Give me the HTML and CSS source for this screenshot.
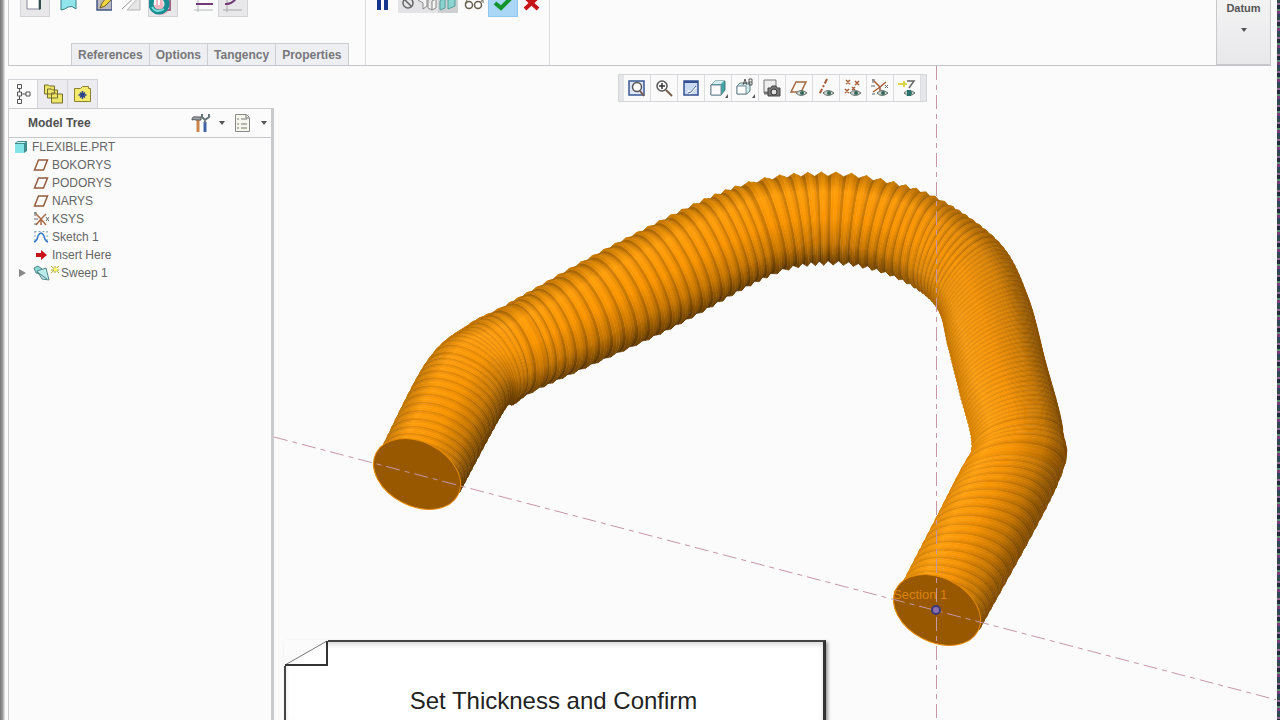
FILE: index.html
```html
<!DOCTYPE html>
<html lang="en">

<head>
    <meta charset="UTF-8">
    <meta name="viewport" content="width=device-width, initial-scale=1.0">
    <title>FLEXIBLE.PRT</title>
    <link rel="stylesheet" href="styles.css">
</head>

<body>
    <div class="app">
        <header class="ribbon">
            <div class="group sweep-group">
                <div class="tools">
                    <button class="tool raised" aria-label="Solid"><svg width="28" height="16"><path d="M6-4H18V9H6Z" fill="#fff" stroke="#889"/><path d="M18-3L20-5V9L18 10Z" fill="#334d4d"/></svg></button>
                    <button class="tool" aria-label="Surface"><svg width="28" height="16"><path d="M7-4Q14 1 22-3V9Q18 5 14 7Q10 10 7 10Z" fill="#8fe5ea" stroke="#367f88"/></svg></button>
                    <button class="tool" aria-label="Sketch"><svg width="28" height="16"><path d="M13-4H28V10H13Z" fill="#b9b9b9" stroke="#46568a" stroke-width="1.500"/><path d="M16 8L18 3L23-3L27 0L21 6Z" fill="#f0d640" stroke="#6b5b20"/></svg></button>
                    <button class="tool" aria-label="Remove material"><svg width="28" height="16"><path d="M13 10L26-4V10Z" fill="#e6e6e6" stroke="#b5b5b5"/><path d="M8 9L23-5" stroke="#999"/></svg></button>
                    <button class="tool raised thicken" aria-label="Thicken"><svg width="28" height="16"><circle cx="11" cy="4" r="11" fill="#f3a3ae" opacity=".7"/><path d="M13-3H21V10H15" fill="#eee" stroke="#8b3f70" stroke-width="1.500"/><circle cx="10" cy="4" r="8" fill="none" stroke="#178c91" stroke-width="5"/><path d="M3 7Q7 14 15 9" fill="none" stroke="#77dadb" stroke-width="2"/><path d="M6-1V5M10-2V5" stroke="#fff" stroke-width="2"/></svg></button>
                    <button class="tool constant" aria-label="Constant section"><svg width="28" height="16"><path d="M4-3V12M0 10H19" stroke="#b3baba"/><path d="M2 4H19" stroke="#713a77" stroke-width="2"/></svg></button>
                    <button class="tool raised" aria-label="Variable section"><svg width="28" height="16"><path d="M8-3V12M4 10H23" stroke="#a9a9a9"/><path d="M6 4Q13 5 18-3" fill="none" stroke="#713a77" stroke-width="2"/></svg></button>
                </div>
                <nav class="ribbon-tabs">
                    <button>References</button>
                    <button>Options</button>
                    <button>Tangency</button>
                    <button>Properties</button>
                </nav>
            </div>
            <div class="group confirm-group">
                <button class="tool pause" aria-label="Pause"><svg width="14" height="16"><path d="M1-2H5V10H1ZM8-2H12V10H8Z" fill="#17378e"/></svg></button>
                <button class="tool preview-modes" aria-label="Preview mode"><svg width="60" height="13"><path d="M40 0H60V13H40Z" fill="#cdd1d2"/><circle cx="10" cy="3" r="5" fill="none" stroke="#666" stroke-width="1.5"/><path d="M6-1L14 7" stroke="#666" stroke-width="1.5"/><path d="M20 0L25 3V9L29 6V0M30 0V8L34 10V1L38-1V8L34 10" fill="#f4f4f4" stroke="#888"/><path d="M42 1L47-2V8L42 10ZM50 0V9L57 6V-3Z" fill="#8bd4d0" stroke="#559e9d"/></svg></button>
                <button class="tool glasses" aria-label="Verified preview"><svg width="24" height="16"><path d="M1 4L4-2M16 3L19-1V3" fill="none" stroke="#67604e"/><circle cx="5" cy="5" r="3.5" fill="#fff" stroke="#67604e" stroke-width="1.5"/><circle cx="14" cy="5" r="3.5" fill="#fff" stroke="#67604e" stroke-width="1.5"/></svg></button>
                <button class="tool ok" aria-label="OK"><svg width="28" height="16"><path d="M6 3L12 8L22-2" fill="none" stroke="#13952b" stroke-width="4"/></svg></button>
                <button class="tool cancel" aria-label="Cancel"><svg width="18" height="16"><path d="M2-3L15 9M15-3L2 9" stroke="#c71517" stroke-width="4"/></svg></button>
            </div>
            <button class="datum">Datum<span class="caret"></span></button>
        </header>

        <main class="workspace">
            <aside class="sidebar">
                <div class="side-tabs">
                    <button class="active" aria-label="Model tree"><svg width="18" height="20" fill="none" stroke="#555"><path d="M3.500.500h4v4h-4zM3.500 8h4v4h-4zM3.500 15.500h4v4h-4zM12 8h4v4h-4zM5.500 5v3M5.500 12v3M8 10h4"/></svg></button>
                    <button aria-label="Folder browser"><svg width="20" height="20" fill="#eee668" stroke="#756d2e"><path d="M1.500 3v-2h4l1 1h5v8h-10zM4.500 7v-2h4l1 1h5v8h-10zM8.500 11v-2h4l1 1h6v9h-11z"/></svg></button>
                    <button aria-label="Favorites"><svg width="20" height="20"><path d="M1.500 4.500h6l2-2h6v2h2v13h-16z" fill="#f4ea6d" stroke="#8c812f"/><path d="M9.500 7v8M5.500 11h8M7 8.500l5 5M12 8.500l-5 5" stroke="#27418c" stroke-width="1.500"/></svg></button>
                </div>
                <section class="tree-panel">
                    <div class="tree-header">
                        <h2>Model Tree</h2>
                        <button class="tree-button" aria-label="Tree settings"><svg width="20" height="20"><path d="M7 7V19" stroke="#cc8448" stroke-width="3"/><path d="M1 7Q1 3 5 4H10V7H5Q3 6 1 7Z" fill="#9ba7ad" stroke="#555"/><path d="M14 9V19" stroke="#3f64a8" stroke-width="3"/><path d="M11 1V4L14 7L18 4V1M14 6V10" fill="none" stroke="#66757b" stroke-width="2"/></svg><span class="caret"></span></button>
                        <button class="tree-button" aria-label="Tree display"><svg width="20" height="20"><path d="M2.500 1.500h11l3 3v14h-14z" fill="#f7f7ee" stroke="#888"/><path d="M13 2v3h3M4 6h2M4 11h2M4 15h2M8 6h6M8 11h6M8 15h6" fill="none" stroke="#777"/></svg><span class="caret"></span></button>
                    </div>
                    <ul class="tree">
                        <li class="root"><svg width="16" height="16"><path d="M2 4L5 2H14V12L11 14H2Z" fill="#438c8e"/><path d="M2 5H11V14H2Z" fill="#83e4e8"/><path d="M3 4L5 3H13L11 4Z" fill="#c9f5f6"/></svg>FLEXIBLE.PRT</li>
                        <li><svg width="16" height="16"><use href="#plane"/></svg>BOKORYS</li>
                        <li><svg width="16" height="16"><use href="#plane"/></svg>PODORYS</li>
                        <li><svg width="16" height="16"><use href="#plane"/></svg>NARYS</li>
                        <li><svg width="16" height="16"><use href="#csys"/></svg>KSYS</li>
                        <li><svg width="16" height="16"><path d="M1.500 2.500h13M2 2v12M14 2v12" stroke="#8aa" stroke-dasharray="2 2"/><path d="M1 13Q4 12 5 7Q8 1 11 7Q12 12 15 13" fill="none" stroke="#2f78c8" stroke-width="1.500"/></svg>Sketch 1</li>
                        <li><svg width="16" height="16"><path d="M3 6H8V3L14 8L8 13V10H3Z" fill="#c9141c"/></svg>Insert Here</li>
                        <li class="sweep"><span class="expander"></span><svg width="26" height="16"><path d="M1 3L5 1L9 4V9L3 8Z" fill="#8adbd8" stroke="#588"/><path d="M4 6L13 3L16 15L9 14Z" fill="#b9eceb" stroke="#588"/><path d="M4 7L14 14" stroke="#477"/><path d="M18 1L26 8M26 1L18 8M22 1V8M18 5H26" stroke="#a9a82a"/><path d="M21 3h3v3h-3z" fill="#ffff5a"/></svg>Sweep 1</li>
                    </ul>
                </section>
            </aside>

            <section class="stage">
                <svg class="model" viewBox="274 66 1002 654" preserveAspectRatio="xMinYMin slice">
                    <defs id="gradients"></defs>
                    <g id="hose"></g>
                    <ellipse class="cap" cx="417" cy="474" rx="46" ry="32" transform="rotate(27 417 474)"/>
                    <ellipse class="cap" cx="937" cy="610" rx="46" ry="32" transform="rotate(27 937 610)"/>
                    <path class="axis" d="M274 437L1277 700"/>
                    <path class="axis" d="M936.500 66V720"/>
                    <circle cx="936" cy="610" r="4" fill="#8b70ae" stroke="#3d3978" stroke-width="2"/>
                    <text class="section-label" x="893" y="599">Section 1</text>
                </svg>

                <div class="view-toolbar">
                    <button aria-label="Refit"><svg width="20" height="20"><path d="M2 3h15v14H2z" fill="#dfe7f6" stroke="#395994" stroke-width="1.500"/><circle cx="10" cy="9" r="4.500" fill="#fff" stroke="#555" stroke-width="1.500"/><path d="M13 13l4 5" stroke="#795b49" stroke-width="2"/></svg></button>
                    <button aria-label="Zoom in"><svg width="20" height="20"><circle cx="8" cy="8" r="5" fill="#fff" stroke="#555" stroke-width="1.500"/><path d="M5 8h6M8 5v6" stroke="#333" stroke-width="1.500"/><path d="M12 12l6 6" stroke="#775c4d" stroke-width="2"/></svg></button>
                    <button aria-label="Repaint"><svg width="20" height="20"><path d="M3 3h14v14H3z" fill="#c9daf3" stroke="#344f91" stroke-width="1.500"/><path d="M3 4h14" stroke="#344f91" stroke-width="2"/><path d="M7 13l2 2L15 9" fill="none" stroke="#fff" stroke-width="2"/><path d="M7 15l3-1 5-6" fill="none" stroke="#46639c"/></svg></button>
                    <button aria-label="Display style"><svg width="20" height="20"><path d="M3 7l4-4h10v9l-4 5H3z" fill="#40a6a4" stroke="#467e7f"/><path d="M3 7h10v10H3z" fill="#fafafa" stroke="#789"/><path d="M4 6l3-3h9l-3 3z" fill="#d5efef"/><path d="M17 20l3-4v4z" fill="#555"/></svg></button>
                    <button aria-label="Saved orientations"><svg width="20" height="20"><path d="M2 8l3-3h10v8l-3 3H2z" fill="#cdeaea" stroke="#607e80"/><path d="M2 8h9v8H2z" fill="#fff" stroke="#789"/><path d="M8 7l2-6 2 6M9 5h3M14 1v6h3V1h-3M14 4h3" fill="none" stroke="#555"/><path d="M17 20l3-4v4z" fill="#555"/></svg></button>
                    <button aria-label="View manager"><svg width="20" height="20"><path d="M2 15V2h12v6" fill="#eee" stroke="#777"/><path d="M2 15h4" stroke="#777" stroke-width="3"/><path d="M6 10h3l1-2h4l1 2h3v8H6z" fill="#777" stroke="#444"/><circle cx="12" cy="14" r="3" fill="#ddd" stroke="#333"/></svg></button>
                    <button aria-label="Plane display"><svg width="20" height="20"><path d="M2 14L7 4h10l-5 10z" fill="#fffaf4" stroke="#a36842" stroke-width="1.500"/><use href="#eye"/></svg></button>
                    <button aria-label="Axis display"><svg width="20" height="20"><path d="M11 1L3 17" stroke="#a65c36" stroke-width="2" stroke-dasharray="5 2 2 2"/><use href="#eye"/></svg></button>
                    <button aria-label="Point display"><svg width="20" height="20"><path d="M3 2l4 4M7 2L3 6M12 3l4 4M16 3l-4 4M2 11l4 4M6 11l-4 4M9 9l3 3M12 9l-3 3" stroke="#a65c36" stroke-width="1.500"/><use href="#eye"/></svg></button>
                    <button aria-label="Csys display"><svg width="20" height="20"><path d="M10 9L4 3M10 9l6-5M10 9l-7 5M10 9v5" stroke="#a65c36" stroke-width="1.500"/><path d="M2 2h3M3 1v4M1 8h4M15 7l3 3M18 7l-3 3M2 16h3" stroke="#666"/><use href="#eye"/></svg></button>
                    <button aria-label="Annotation display"><svg width="20" height="20"><path d="M1 6h9M7 3v6" stroke="#ddd344" stroke-width="2"/><path d="M10 3h7l-5 7" fill="none" stroke="#666" stroke-width="1.500"/><use href="#eye"/><path d="M10 12h4v6h-4z" fill="#28746d"/></svg></button>
                </div>

                <div class="note">
                    <svg class="note-fold" width="44" height="26"><path d="M1 25L43 1V25Z" fill="#fff"/><path d="M1 25L43 1" stroke="#777"/><path d="M1 25H43V1" fill="none" stroke="#333" stroke-width="2"/></svg>
                    <p>Set Thickness and Confirm</p>
                </div>
            </section>
        </main>
    </div>

    <svg class="symbols">
        <symbol id="plane" viewBox="0 0 16 16"><path d="M1.500 13L5.500 3h9l-4 10z" fill="none" stroke="#945c40" stroke-width="1.500"/></symbol>
        <symbol id="csys" viewBox="0 0 16 16"><path d="M8 8L3 3M8 8l5-5M8 8l-5 6M8 8l5 6M8 8V14" stroke="#a96b45" stroke-width="1.500"/><path d="M1 2h3M2 1v4M1 8h4M13 6l3 4M16 6l-3 4M1 13h3" stroke="#666"/></symbol>
        <symbol id="eye" viewBox="0 0 20 20"><path d="M7 15q5-5 11 0q-6 5-11 0z" fill="#ccd8d4" stroke="#626d65"/><circle cx="13" cy="15" r="2" fill="#35685c"/></symbol>
    </svg>

    <script src="hose.js"></script>
</body>

</html>
```

FILE: styles.css
```css
* {
    box-sizing: border-box;
}

body {
    margin: 0;
    font-family: "Liberation Sans", Arial, sans-serif;
    font-size: 12px;
    color: #666;
    background: #fbfbfb;
}

button {
    margin: 0;
    padding: 0;
    border: 0;
    background: none;
    font: inherit;
    color: inherit;
}

svg {
    display: block;
    flex: none;
}

.app {
    display: flex;
    flex-direction: column;
    height: 100vh;
    overflow: hidden;
    padding: 0 4px 0 8px;
    position: relative;
}

/* window edges */
.app::before,
.app::after {
    content: "";
    position: absolute;
    top: 0;
    bottom: 0;
}

.app::before {
    left: 0;
    width: 5px;
    background: linear-gradient(to right, #777, #999 50%, #eee);
}

.app::after {
    right: 0;
    width: 3px;
    background: repeating-linear-gradient(#314c49 0 3px, #92689b 3px 5px, #222a3b 5px 9px, #5a8d72 9px 11px, #793c79 11px 14px, #30445f 14px 17px);
}

/* ribbon */
.ribbon {
    display: flex;
    height: 66px;
    flex: none;
    border-left: 1px solid #ccc;
    border-bottom: 1px solid #c4c5c8;
    margin-right: 5px;
}

.group {
    border-right: 1px solid #d8dade;
}

.sweep-group {
    display: flex;
    flex-direction: column;
    justify-content: space-between;
    width: 357px;
}

.tools {
    display: flex;
    gap: 5px;
    padding-left: 12px;
}

.tool {
    height: 16px;
}

.raised {
    background: #e8e8ea;
    box-shadow: 0 0 0 1px #d3d3d6;
}

.tools .tool:nth-child(3),
.tools .tool:nth-child(4) {
    margin-left: -3px;
}

.thicken {
    margin-left: 2px;
}

.constant {
    margin-left: 12px;
    margin-right: -8px;
}

.ribbon-tabs {
    display: flex;
    padding-left: 62px;
}

.ribbon-tabs button {
    height: 22px;
    padding: 0 6px;
    border: 1px solid #ccced2;
    border-bottom: 0;
    border-left-width: 0;
    background: #eeeff2;
    font-weight: bold;
    color: #77777b;
}

.ribbon-tabs button:first-child {
    border-left-width: 1px;
}

.confirm-group {
    display: flex;
    align-items: flex-start;
    gap: 6px;
    width: 184px;
    padding-left: 10px;
}

.preview-modes {
    height: 13px;
    background: #e4e4e6;
    margin-left: 2px;
}

.glasses {
    margin-right: -5px;
}

.ok {
    background: #aad7f5;
    box-shadow: 0 0 0 1px #91c7ec;
}

.datum {
    display: flex;
    flex-direction: column;
    align-items: center;
    gap: 14px;
    width: 55px;
    height: 65px;
    margin-left: auto;
    padding-top: 2px;
    border: 1px solid #c8c8ca;
    border-top: 0;
    background: linear-gradient(#f3f3f4, #e8e8ea);
    font-weight: bold;
    font-size: 11px;
    color: #555;
}

.caret {
    border: 3px solid transparent;
    border-top: 4px solid #555;
    border-bottom: 0;
}

/* model tree */
.workspace {
    display: flex;
    flex: 1;
    min-height: 0;
}

.sidebar {
    display: flex;
    flex-direction: column;
    width: 266px;
    flex: none;
    padding-top: 13px;
}

.side-tabs {
    display: flex;
}

.side-tabs button {
    display: grid;
    place-items: center;
    width: 30px;
    height: 29px;
    border: 1px solid #d3d4d8;
    border-left-width: 0;
    border-bottom: 0;
    background: #ececf0;
}

.side-tabs .active {
    border-left-width: 1px;
    background: #fbfbfb;
}

.tree-panel {
    flex: 1;
    border: 1px solid #ccc;
    border-right: 3px solid #c9cacc;
    border-bottom: 0;
}

.tree-header {
    display: flex;
    align-items: center;
    gap: 8px;
    height: 29px;
    padding: 0 4px 0 19px;
    border-bottom: 1px solid #c8c9cc;
}

.tree-header h2 {
    flex: 1;
    margin: 0;
    font-size: 12px;
    color: #505050;
}

.tree-button {
    display: flex;
    align-items: center;
    gap: 8px;
}

.tree {
    margin: 0;
    padding: 0;
    list-style: none;
}

.tree li {
    display: flex;
    align-items: center;
    gap: 3px;
    height: 18px;
    padding-left: 24px;
}

.tree .root {
    padding-left: 4px;
}

.tree .sweep {
    gap: 2px;
    padding-left: 10px;
}

.expander {
    border: 4px solid transparent;
    border-left: 7px solid #888;
    border-right: 0;
    margin-right: 5px;
}

/* graphics window */
.stage {
    position: relative;
    flex: 1;
    overflow: hidden;
}

.model {
    width: 100%;
    height: 100%;
}

.cap {
    fill: #975800;
    stroke: #e48900;
    stroke-width: 1px;
}

.axis {
    fill: none;
    stroke: #c697a5;
    stroke-width: 1px;
    stroke-dasharray: 14 5 5 5;
}

.section-label {
    font-size: 13px;
    fill: #dc8307;
}

.view-toolbar {
    position: absolute;
    top: 8px;
    left: 344px;
    display: flex;
    padding: 0 5px;
    border: 1px solid #d4d6da;
    background: #e5e6e9;
}

.view-toolbar button {
    display: grid;
    place-items: center;
    width: 27px;
    height: 26px;
    border-right: 1px solid #dcdde1;
    background: #fafafa;
}

.note {
    position: absolute;
    left: 10px;
    bottom: 0;
    width: 542px;
    height: 80px;
    border-top: 2px solid #444;
    border-right: 3px solid #333;
    border-left: 2px solid #444;
    background: #fff;
    box-shadow: 2px 2px 3px #999, inset 0 3px 4px #ddd;
}

.note p {
    margin: 0;
    padding: 45px 2px 0 0;
    text-align: center;
    font-size: 24px;
    line-height: 28px;
    color: #222;
}

.note-fold {
    position: absolute;
    top: -2px;
    left: -2px;
    background: #fbfbfb;
}

.symbols {
    position: absolute;
    width: 0;
    height: 0;
}
```

FILE: hose.js
```javascript
// Each station: outer x,y, inner x,y, bulge x,y, light (0 = lit from outer side, 1 = lit from inner side), depth, ribs to next
const stations = [
    [375, 462, 459, 493, 16, -30, 0, 0.4, 14],
    [425, 365, 503, 412, 17, -33, 0, 0.5, 7],
    [465, 328, 514, 404, 24, -24, 0, 0.8, 4],
    [505, 306, 540, 388, 24, -16, 0, 1, 11],
    [620, 242, 665, 331, 20, -12, 0, 1.1, 11],
    [740, 186, 770, 275, 12, -4, 0, 1.8, 6],
    [828, 174, 828, 263, 0, 0, 0, 2.8, 5],
    [900, 185, 877, 270, -10, -4, 0.1, 2, 5],
    [950, 206, 918, 289, -17, -12, 0.3, 1.3, 8],
    [1002, 247, 940, 312, -14, -24, 0.6, 0.9, 11],
    [1028, 300, 948, 345, -2, -30, 0.8, 0.6, 14],
    [1045, 365, 960, 394, 3, -32, 0.9, 0.5, 14],
    [1062, 436, 972, 446, 8, -32, 1, 0.6, 5],
    [1057, 485, 957, 478, 14, -36, 1, 0.5, 18],
    [979, 630, 895, 598, 16, -30, 1, 0.4, 0]
];

const litOuter = [[196, 118, 0], [255, 155, 10], [246, 146, 0], [196, 116, 0], [105, 62, 0]];
const litInner = [[128, 75, 0], [196, 116, 0], [244, 144, 2], [255, 158, 12], [220, 132, 0]];
const svgNS = 'http://www.w3.org/2000/svg';
const hose = document.getElementById('hose');
const gradients = document.getElementById('gradients');

function sample(k, t) {
    const at = i => stations[Math.max(0, Math.min(stations.length - 1, i))];
    const p = at(k - 1), a = at(k), b = at(k + 1), n = at(k + 2);
    return a.slice(0, 8).map((v, i) => {
        if (i > 5) return v + (b[i] - v) * t;
        return 0.5 * (2 * v + (b[i] - p[i]) * t + (2 * p[i] - 5 * v + 4 * b[i] - n[i]) * t * t + (3 * v - p[i] - 3 * b[i] + n[i]) * t * t * t);
    });
}

function add(parent, tag, attrs) {
    const el = document.createElementNS(svgNS, tag);
    for (const name in attrs) el.setAttribute(name, attrs[name]);
    parent.appendChild(el);
    return el;
}

// Curve over the visible side of the ring
function ring(s) {
    return `C${s[0] + s[4]} ${s[1] + s[5]} ${s[2] + s[4]} ${s[3] + s[5]} ${s[2]} ${s[3]}`;
}

function ringBack(s) {
    return `C${s[2] + s[4]} ${s[3] + s[5]} ${s[0] + s[4]} ${s[1] + s[5]} ${s[0]} ${s[1]}`;
}

const slices = 4;
const shade = [0.83, 1.01, 1.03, 0.96];
const swell = [-1, 0, 1, 0];

function shaped(s, phase) {
    const dx = s[0] - s[2], dy = s[1] - s[3];
    const push = swell[phase % slices] * s[7] / Math.hypot(dx, dy) * 0.8;
    const r = s.slice();
    r[0] += dx * push;
    r[1] += dy * push;
    r[2] -= dx * push;
    r[3] -= dy * push;
    return r;
}

const rings = [];
stations.slice(0, -1).forEach((station, k) => {
    const steps = station[8] * slices;
    for (let i = 0; i < steps; i++) {
        rings.push(shaped(sample(k, i / steps), i));
    }
});
rings.push(sample(stations.length - 2, 1));

for (let i = 0; i < rings.length - 1; i++) {
    const a = rings[i], b = rings[i + 1];
    const id = 'rib' + i;
    const gradient = add(gradients, 'linearGradient', {
        id, gradientUnits: 'userSpaceOnUse', x1: a[0], y1: a[1], x2: a[2], y2: a[3]
    });
    // tightly packed ribs get shallower grooves
    const contrast = a[7] < 0.9 ? 0.6 : 1;
    const tone = 1 + (shade[i % slices] - 1) * contrast;
    [0, 0.2, 0.5, 0.78, 1].forEach((offset, n) => {
        const rgb = litOuter[n].map((c, j) => Math.min(255, Math.round((c + (litInner[n][j] - c) * a[6]) * tone)));
        add(gradient, 'stop', { offset, 'stop-color': `rgb(${rgb})` });
    });
    add(hose, 'path', {
        d: `M${a[0]} ${a[1]}${ring(a)}L${b[2]} ${b[3]}${ringBack(b)}Z`,
        fill: `url(#${id})`,
        stroke: `url(#${id})`,
        'stroke-width': 0.6
    });
}
```
